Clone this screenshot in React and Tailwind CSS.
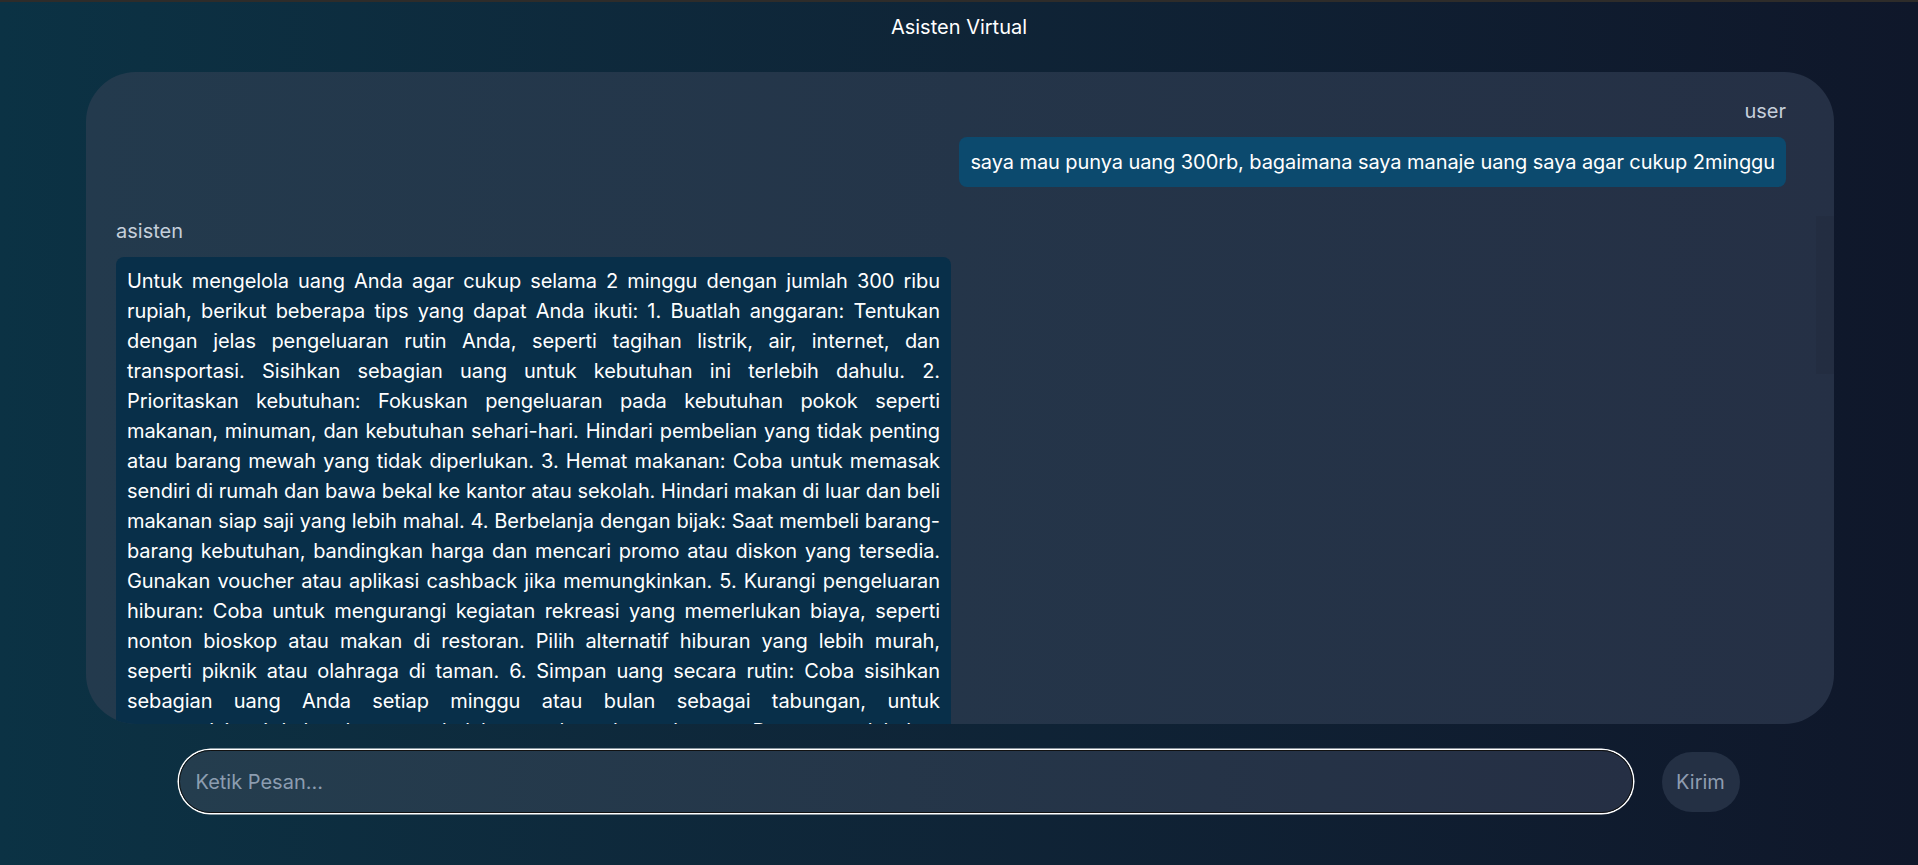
import { useState } from 'react'

const messages = [
  {
    role: 'user',
    text: 'saya mau punya uang 300rb, bagaimana saya manaje uang saya agar cukup 2minggu',
  },
  {
    role: 'asisten',
    text: 'Untuk mengelola uang Anda agar cukup selama 2 minggu dengan jumlah 300 ribu rupiah, berikut beberapa tips yang dapat Anda ikuti: 1. Buatlah anggaran: Tentukan dengan jelas pengeluaran rutin Anda, seperti tagihan listrik, air, internet, dan transportasi. Sisihkan sebagian uang untuk kebutuhan ini terlebih dahulu. 2. Prioritaskan kebutuhan: Fokuskan pengeluaran pada kebutuhan pokok seperti makanan, minuman, dan kebutuhan sehari-hari. Hindari pembelian yang tidak penting atau barang mewah yang tidak diperlukan. 3. Hemat makanan: Coba untuk memasak sendiri di rumah dan bawa bekal ke kantor atau sekolah. Hindari makan di luar dan beli makanan siap saji yang lebih mahal. 4. Berbelanja dengan bijak: Saat membeli barang-barang kebutuhan, bandingkan harga dan mencari promo atau diskon yang tersedia. Gunakan voucher atau aplikasi cashback jika memungkinkan. 5. Kurangi pengeluaran hiburan: Coba untuk mengurangi kegiatan rekreasi yang memerlukan biaya, seperti nonton bioskop atau makan di restoran. Pilih alternatif hiburan yang lebih murah, seperti piknik atau olahraga di taman. 6. Simpan uang secara rutin: Coba sisihkan sebagian uang Anda setiap minggu atau bulan sebagai tabungan, untuk mengantisipasi kebutuhan mendadak atau keperluan darurat. Dengan melakukan langkah-langkah berikut, Anda dapat mengelola uang 300 ribu agar cukup selama 2 minggu.',
  },
]

export default function App() {
  const [input, setInput] = useState('')

  return (
    <main className="h-screen overflow-hidden flex flex-col border-t-2 border-[#2e2c2a] bg-linear-to-r from-[#0b3244] to-[#0f172a] font-['Inter',sans-serif]">
      <header className="h-[70px] pt-[11px] text-center text-xl leading-7 text-white">
        Asisten Virtual
      </header>

      <div className="pl-[86px] pr-[84px]">
        <div className="relative h-[652px] overflow-hidden rounded-[50px] bg-linear-to-r from-[#233a4d] to-[#253045] pt-[25px] pl-[30px] pr-[48px]">
          <div className="flex flex-col gap-[30px]">
            {messages.map((m, i) => (
              <div
                key={i}
                className={m.role === 'user' ? 'flex flex-col items-end' : 'flex flex-col items-start'}
              >
                <span className="mb-3 text-xl leading-7 text-[#c5cfdb]">{m.role}</span>
                {m.role === 'user' ? (
                  <div className="rounded-lg bg-[#0c4a6e] px-[11px] py-[11px] text-xl leading-7 tracking-[-0.08px] text-white">
                    {m.text}
                  </div>
                ) : (
                  <div className="max-w-[50%] rounded-lg bg-[#082f49] px-[11px] pt-[9px] pb-[10px] text-justify text-xl leading-[30px] tracking-[-0.08px] text-white">
                    {m.text}
                  </div>
                )}
              </div>
            ))}
          </div>
          {/* scrollbar thumb */}
          <div className="absolute right-0 top-[144px] h-[158px] w-[18px] bg-black/[0.05]" />
        </div>
      </div>

      <div className="flex items-center justify-center gap-[29px] pt-[26px]">
        <input
          autoFocus
          value={input}
          onChange={(e) => setInput(e.target.value)}
          placeholder="Ketik Pesan..."
          className="h-[63px] w-[1454px] rounded-full border-[1.5px] border-[#111] bg-linear-to-r from-[#243d4e] to-[#252f44] px-4 text-xl text-white caret-white outline-none ring-[1.5px] ring-white placeholder:text-[#8c9db0]"
        />
        <button className="h-[60px] w-[78px] rounded-full bg-[#243044] text-xl text-[#8f9cb0]">
          Kirim
        </button>
      </div>
    </main>
  )
}
